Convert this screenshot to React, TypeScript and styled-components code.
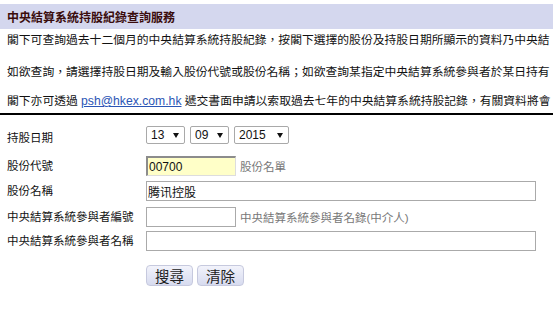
import React from 'react'
import styled, {createGlobalStyle} from 'styled-components'

const GlobalStyle = createGlobalStyle`
  html,body{
    margin:0;
    padding:0;
    overflow:hidden;
    background:#fff;
  }
  body{
    font-family:"Liberation Sans", Arial, "Noto Sans CJK TC", sans-serif;
    font-size:11.5px;
    color:#111;
  }
`

const Page = styled.div`
  padding-top:4px;
  width:553px;
  overflow:hidden;
`

const TitleBar = styled.div`
  height:25px;
  display:flex;
  align-items:center;
  padding-left:7px;
  background:#d4d7ee;
  color:#3a0c0c;
  font-size:12px;
  font-weight:bold;
`

const Para = styled.p<{$top:number}>`
  margin:${p=>p.$top}px 0 0 0;
  padding-left:7px;
  font-size:11.8px;
  line-height:16px;
  white-space:nowrap;
  overflow:hidden;
`

const Mail = styled.a`
  color:#2b55b5;
  text-decoration:underline;
  font-size:12.2px;
`

const Rule = styled.div`
  margin-top:4px;
  height:2px;
  background:#000;
`

const Form = styled.div`
  margin-top:9px;
  padding:0 7px;
`

const Row = styled.div<{$gap?:number}>`
  display:flex;
  align-items:center;
  margin-top:${p=>p.$gap ?? 0}px;
`

const Label = styled.div<{$drop?:number}>`
  flex:none;
  width:139px;
  line-height:16px;
  padding-top:${p=>p.$drop ?? 0}px;
`

const Field = styled.div`
  display:flex;
  align-items:center;
  gap:5px;
`

const SelectWrap = styled.div`
  position:relative;
`

const Select = styled.select<{$w:number}>`
  appearance:none;
  box-sizing:border-box;
  width:${p=>p.$w}px;
  height:18px;
  margin:0;
  padding:0 14px 0 4px;
  border:1px solid #a9a9a9;
  border-radius:2px;
  background:#fff;
  color:#111;
  font-family:"Liberation Sans", Arial, sans-serif;
  font-size:12px;
`

const Arrow = styled.span`
  position:absolute;
  right:6px;
  top:7px;
  width:0;
  height:0;
  border-left:3px solid transparent;
  border-right:3px solid transparent;
  border-top:5px solid #111;
  pointer-events:none;
`

const TextBox = styled.input<{$w:number;$marked?:boolean}>`
  box-sizing:border-box;
  width:${p=>p.$w}px;
  height:20px;
  margin:0;
  padding:0 1px;
  border:1px solid #aaa;
  ${p=>p.$marked ? 'border-top:2px solid #8c8c8c;border-left:2px solid #8c8c8c;border-right-color:#ddd;border-bottom-color:#ddd;' : ''}
  background:${p=>p.$marked ? '#ffffc8' : '#fff'};
  color:#111;
  font-family:"Liberation Sans", Arial, "Noto Sans CJK SC", sans-serif;
  font-size:12px;
  outline:none;
`

const Hint = styled.span`
  margin-left:-1px;
  color:#777;
  white-space:nowrap;
`

const Button = styled.button`
  box-sizing:border-box;
  width:47px;
  height:21px;
  margin:0;
  padding:0;
  border:1px solid #c6c9de;
  border-radius:4px;
  background:linear-gradient(#f2f3fb, #d7dbef);
  color:#222;
  font-family:"Noto Sans CJK TC", sans-serif;
  font-size:14.5px;
  line-height:19px;
`

const Buttons = styled.div`
  display:flex;
  gap:4px;
`

const DateSelect = ({value,options,w}:{value:string;options:string[];w:number})=>(
  <SelectWrap>
    <Select $w={w} defaultValue={value}>
      {options.map(o=><option key={o} value={o}>{o}</option>)}
    </Select>
    <Arrow/>
  </SelectWrap>
)

const pad = (n:number)=> (n<10 ? '0'+n : ''+n)
const days = Array.from({length:31},(_,i)=>pad(i+1))
const months = Array.from({length:12},(_,i)=>pad(i+1))
const years = ['2014','2015']

export default function App(){
  return(
    <Page>
      <GlobalStyle/>
      <TitleBar>中央結算系統持股紀錄查詢服務</TitleBar>
      <Para $top={3}>
        閣下可查詢過去十二個月的中央結算系統持股紀錄，按閣下選擇的股份及持股日期所顯示的資料乃中央結
      </Para>
      <Para $top={16}>
        如欲查詢，請選擇持股日期及輸入股份代號或股份名稱；如欲查詢某指定中央結算系統參與者於某日持有
      </Para>
      <Para $top={13}>
        閣下亦可透過 <Mail href="#">psh@hkex.com.hk</Mail> 遞交書面申請以索取過去七年的中央結算系統持股記錄，有關資料將會
      </Para>
      <Rule/>
      <Form>
        <Row>
          <Label $drop={6}>持股日期</Label>
          <Field>
            <DateSelect value="13" options={days} w={39}/>
            <DateSelect value="09" options={months} w={39}/>
            <DateSelect value="2015" options={years} w={55}/>
          </Field>
        </Row>
        <Row $gap={10}>
          <Label>股份代號</Label>
          <Field>
            <TextBox $w={90} $marked defaultValue="00700"/>
            <Hint>股份名單</Hint>
          </Field>
        </Row>
        <Row $gap={5}>
          <Label>股份名稱</Label>
          <TextBox $w={390} defaultValue="腾讯控股"/>
        </Row>
        <Row $gap={6}>
          <Label>中央結算系統參與者編號</Label>
          <Field>
            <TextBox $w={90}/>
            <Hint>中央結算系統參與者名錄(中介人)</Hint>
          </Field>
        </Row>
        <Row $gap={4}>
          <Label>中央結算系統參與者名稱</Label>
          <TextBox $w={390}/>
        </Row>
        <Row $gap={14}>
          <Label/>
          <Buttons>
            <Button>搜尋</Button>
            <Button>清除</Button>
          </Buttons>
        </Row>
      </Form>
    </Page>
  )
}
